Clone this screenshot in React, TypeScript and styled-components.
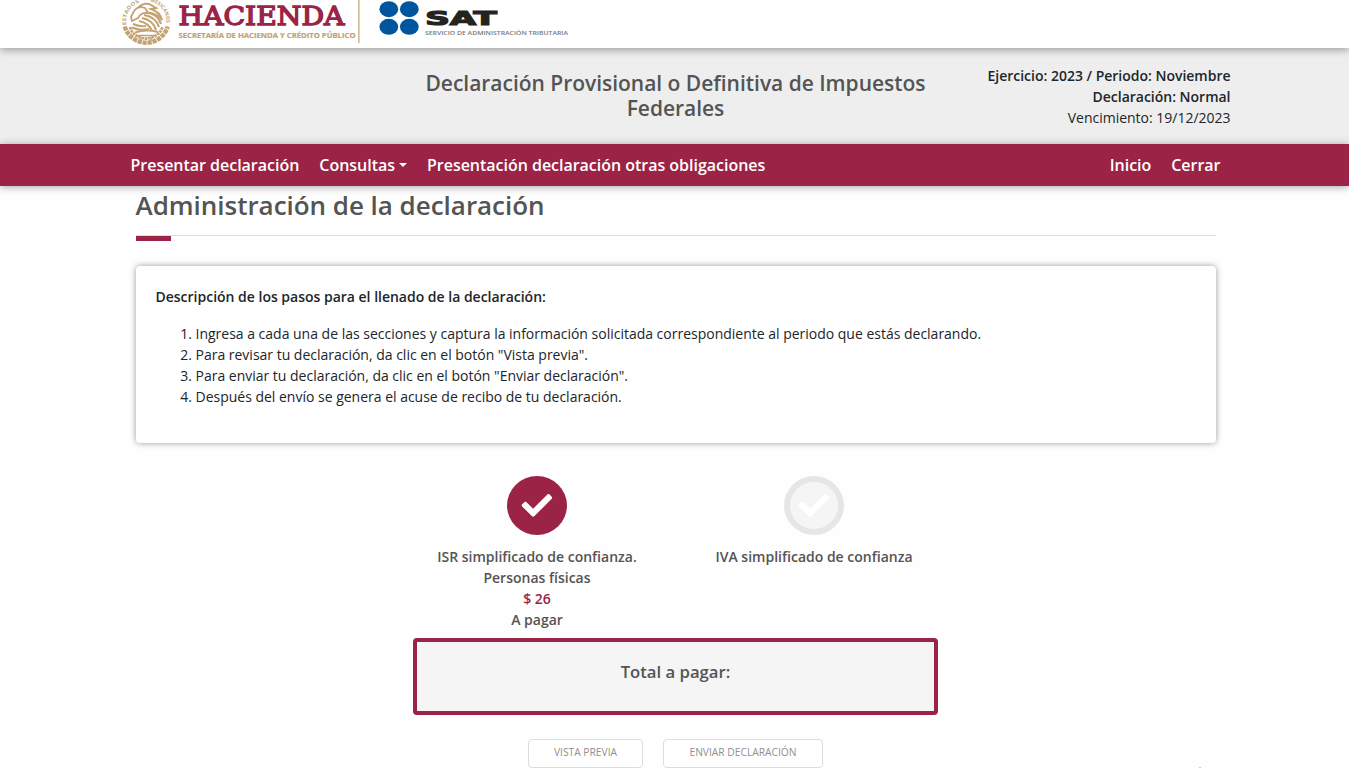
import React from "react";
import styled, { createGlobalStyle } from "styled-components";

const wine = "#9b2446";
const gold = "#c3a374";

const GlobalStyle = createGlobalStyle`
  * { box-sizing: border-box; }
  html, body { height: 100%; overflow: hidden; }
  body {
    margin: 0;
    background: #fefefe;
    color: #212529;
    font: 400 14px/21px "Open Sans", sans-serif;
  }
`;

const Page = styled.div`
  position: relative;
  height: 768px;
  overflow: hidden;
`;

const Header = styled.header`
  position: relative;
  z-index: 1;
  display: flex;
  height: 48px;
  padding-left: 120px;
  background: #fff;
  box-shadow: 0 2px 8px rgba(0, 0, 0, 0.35);
`;

const LogoArt = styled.svg`
  display: block;
  flex: none;
`;

const TitleBand = styled.section`
  display: grid;
  grid-template-columns: 1fr 525px 1fr;
  height: 96px;
  padding: 0 118.5px 0 119.5px;
  background: #eee;
`;

const PageTitle = styled.h1`
  grid-column: 2;
  margin: 0;
  padding: 23px 0 0 1px;
  color: #545454;
  font-size: 21px;
  font-weight: 600;
  line-height: 25px;
  letter-spacing: -0.025px;
  text-align: center;
`;

const Period = styled.div`
  padding-top: 17px;
  letter-spacing: -0.01px;
  text-align: right;
  white-space: nowrap;
`;

const PeriodLine = styled.div<{ $strong?: boolean }>`
  font-weight: ${(p) => (p.$strong ? 600 : 400)};
`;

const Nav = styled.nav`
  position: relative;
  display: flex;
  align-items: center;
  gap: 20px;
  height: 42px;
  padding: 0 128.5px 0 130.5px;
  background: ${wine};
  box-shadow: 0 1px 8px rgba(0, 0, 0, 0.35);
`;

const NavLink = styled.a<{ $push?: boolean }>`
  display: flex;
  align-items: center;
  margin-left: ${(p) => (p.$push ? "auto" : 0)};
  color: #fff;
  font-size: 16px;
  font-weight: 600;
  line-height: 24px;
  letter-spacing: -0.02px;
  white-space: nowrap;
`;

const Caret = styled.span`
  margin-left: 4px;
  border: 4px solid transparent;
  border-top-color: #fff;
  border-bottom: 0;
`;

const Main = styled.main`
  padding: 0 133px 0 136px;
`;

const SectionTitle = styled.h2`
  height: 50px;
  margin: 0;
  padding-top: 2px;
  border-bottom: 1px solid #ddd;
  color: #545454;
  font-size: 26px;
  font-weight: 600;
  line-height: 34px;
  letter-spacing: -0.03px;
  text-indent: -0.5px;
`;

const Accent = styled.div`
  width: 35px;
  height: 5px;
  background: ${wine};
`;

const Card = styled.section`
  height: 177px;
  margin-top: 25px;
  padding: 20px 20px 20px 19.5px;
  border-radius: 4px;
  background: #fff;
  box-shadow: 0 0 6px rgba(0, 0, 0, 0.4);
  letter-spacing: -0.008px;
`;

const CardHeading = styled.p`
  margin: 0 0 16px;
  font-weight: 600;
`;

const Steps = styled.ol`
  margin: 0;
  padding-left: 40px;
`;

const Taxes = styled.section`
  display: flex;
  gap: 47px;
  height: 162px;
  margin: 33px 0 0 286px;
`;

const Tax = styled.div`
  display: flex;
  flex-direction: column;
  align-items: center;
  width: 230px;
  color: #545454;
  font-weight: 600;
  text-align: center;
`;

const StatusIcon = styled.svg`
  display: block;
  flex: none;
  width: 60px;
  height: 59px;
  margin-bottom: 11px;
`;

const Amount = styled.span`
  color: ${wine};
`;

const Total = styled.section`
  width: 525px;
  height: 77px;
  margin-left: 277px;
  padding-top: 18px;
  border: 4px solid ${wine};
  border-radius: 4px;
  background: #f5f5f5;
  color: #545454;
  font-size: 16.7px;
  font-weight: 600;
  line-height: 24px;
  text-align: center;
`;

const Actions = styled.div`
  display: flex;
  gap: 20px;
  margin: 24px 0 0 392px;
`;

const Button = styled.button<{ $width: number }>`
  width: ${(p) => p.$width}px;
  height: 29px;
  padding: 0 0 2px;
  border: 1px solid #ddd;
  border-radius: 4px;
  background: #fff;
  color: #8f8f8f;
  font: 400 10.25px/15px "Open Sans", sans-serif;
`;

const CornerMark = styled.span`
  position: absolute;
  right: 148px;
  bottom: 0;
  width: 2px;
  height: 1px;
  background: #ccc;
`;

const Logos = () => (
  <LogoArt width="460" height="48" viewBox="120 0 460 48">
    <defs>
      <path id="sealLeft" d="M126.5 25.5 A20.3 20.3 0 0 1 143 1.4" />
      <path id="sealRight" d="M149.5 1.4 A20.3 20.3 0 0 1 166 25.5" />
    </defs>
    <g fill="none" stroke={gold}>
      <path
        d="M124.8 26.5 A22.3 22.3 0 0 0 167.7 26.5"
        strokeWidth="4.4"
        strokeDasharray="4.2 0.8"
      />
      <path d="M130 27 Q133 37.5 146 38.5 Q159 37.5 162.5 27" strokeWidth="2.8" strokeDasharray="2.6 0.7" />
      <path d="M138 8 Q142 3 149 4 L156 8 L151 9 Q160 12 162 20 Q157 14 150 13" strokeWidth="2" />
      <path d="M133 13 Q137 5 145 8 L148 13 Q141 12 138 18 L132 21 L131 17 Z" strokeWidth="1.8" />
      <path d="M146 12 Q158 14 161 24 M144 15 Q156 17 159 27 M142 18 Q153 20 156 30 M139 21 Q149 23 152 31" strokeWidth="2.2" />
      <path d="M133 24 Q139 27 146 26 M132 27.5 Q139 31 149 29 M135 32.5 Q146 29 158 32" strokeWidth="2" />
      <path d="M136 35.5 H156 M141 38 V41 M151 38 V41" strokeWidth="1.6" />
    </g>
    <g fill={gold} fontFamily="Open Sans, sans-serif" fontSize="5.2" fontWeight="700">
      <text>
        <textPath href="#sealLeft" startOffset="0.5" textLength="28" lengthAdjust="spacingAndGlyphs">ESTADOS</textPath>
      </text>
      <text>
        <textPath href="#sealRight" startOffset="0.5" textLength="29" lengthAdjust="spacingAndGlyphs">MEXICANOS</textPath>
      </text>
    </g>
    <text x="178.5" y="24.7" fill={wine} stroke={wine} strokeWidth="1.4" fontFamily="DejaVu Serif, serif" fontSize="26.2" fontWeight="400" textLength="166" lengthAdjust="spacingAndGlyphs">
      HACIENDA
    </text>
    <text x="178.5" y="38" fill={gold} stroke={gold} strokeWidth="0.2" fontFamily="Open Sans, sans-serif" fontSize="6.6" fontWeight="700" textLength="177" lengthAdjust="spacingAndGlyphs">
      SECRETARÍA DE HACIENDA Y CRÉDITO PÚBLICO
    </text>
    <rect x="358.3" y="0" width="1.2" height="43" fill={gold} />
    <g fill="#00559f">
      <ellipse cx="388.8" cy="9.2" rx="9.4" ry="8" />
      <ellipse cx="409.3" cy="9.2" rx="9.4" ry="8" />
      <ellipse cx="388.8" cy="26.8" rx="9.4" ry="8" />
      <ellipse cx="409.3" cy="26.8" rx="9.4" ry="8" />
    </g>
    <text x="425.2" y="25.2" fill="#24241f" stroke="#24241f" strokeWidth="1.2" fontFamily="DejaVu Sans, sans-serif" fontSize="18.8" fontWeight="700" textLength="71.5" lengthAdjust="spacingAndGlyphs">
      SAT
    </text>
    <text x="425" y="35" fill="#777" fontFamily="Open Sans, sans-serif" fontSize="5.4" fontWeight="600" textLength="143" lengthAdjust="spacingAndGlyphs">
      SERVICIO DE ADMINISTRACIÓN TRIBUTARIA
    </text>
  </LogoArt>
);

const Status = ({ done }: { done?: boolean }) => (
  <StatusIcon viewBox="0 0 60 59">
    <ellipse cx="30" cy="29.5" rx="30" ry="29.5" fill={done ? wine : "#e6e6e6"} />
    <ellipse cx="30" cy="29.5" rx="24" ry="23.5" fill={done ? wine : "#f5f5f5"} />
    <path
      transform="translate(14.7 14.2) scale(0.0595)"
      fill="#fff"
      d="M173.898 439.404l-166.4-166.4c-9.997-9.997-9.997-26.206 0-36.204l36.203-36.204c9.997-9.998 26.207-9.998 36.204 0L192 312.69 432.095 72.596c9.997-9.997 26.207-9.997 36.204 0l36.203 36.204c9.997 9.997 9.997 26.206 0 36.204l-294.4 294.401c-9.998 9.997-26.207 9.997-36.204-.001z"
    />
  </StatusIcon>
);

export default function App() {
  return (
    <>
      <GlobalStyle />
      <Page>
        <Header>
          <Logos />
        </Header>
        <TitleBand>
          <PageTitle>Declaración Provisional o Definitiva de Impuestos Federales</PageTitle>
          <Period>
            <PeriodLine $strong>Ejercicio: 2023 / Periodo: Noviembre</PeriodLine>
            <PeriodLine $strong>Declaración: Normal</PeriodLine>
            <PeriodLine>Vencimiento: 19/12/2023</PeriodLine>
          </Period>
        </TitleBand>
        <Nav>
          <NavLink>Presentar declaración</NavLink>
          <NavLink>
            Consultas
            <Caret />
          </NavLink>
          <NavLink>Presentación declaración otras obligaciones</NavLink>
          <NavLink $push>Inicio</NavLink>
          <NavLink>Cerrar</NavLink>
        </Nav>
        <Main>
          <SectionTitle>Administración de la declaración</SectionTitle>
          <Accent />
          <Card>
            <CardHeading>Descripción de los pasos para el llenado de la declaración:</CardHeading>
            <Steps>
              <li>Ingresa a cada una de las secciones y captura la información solicitada correspondiente al periodo que estás declarando.</li>
              <li>Para revisar tu declaración, da clic en el botón "Vista previa".</li>
              <li>Para enviar tu declaración, da clic en el botón "Enviar declaración".</li>
              <li>Después del envío se genera el acuse de recibo de tu declaración.</li>
            </Steps>
          </Card>
          <Taxes>
            <Tax>
              <Status done />
              <span>ISR simplificado de confianza. Personas físicas</span>
              <Amount>$ 26</Amount>
              <span>A pagar</span>
            </Tax>
            <Tax>
              <Status />
              <span>IVA simplificado de confianza</span>
            </Tax>
          </Taxes>
          <Total>Total a pagar:</Total>
          <Actions>
            <Button $width={115}>VISTA PREVIA</Button>
            <Button $width={160}>ENVIAR DECLARACIÓN</Button>
          </Actions>
        </Main>
        <CornerMark />
      </Page>
    </>
  );
}
